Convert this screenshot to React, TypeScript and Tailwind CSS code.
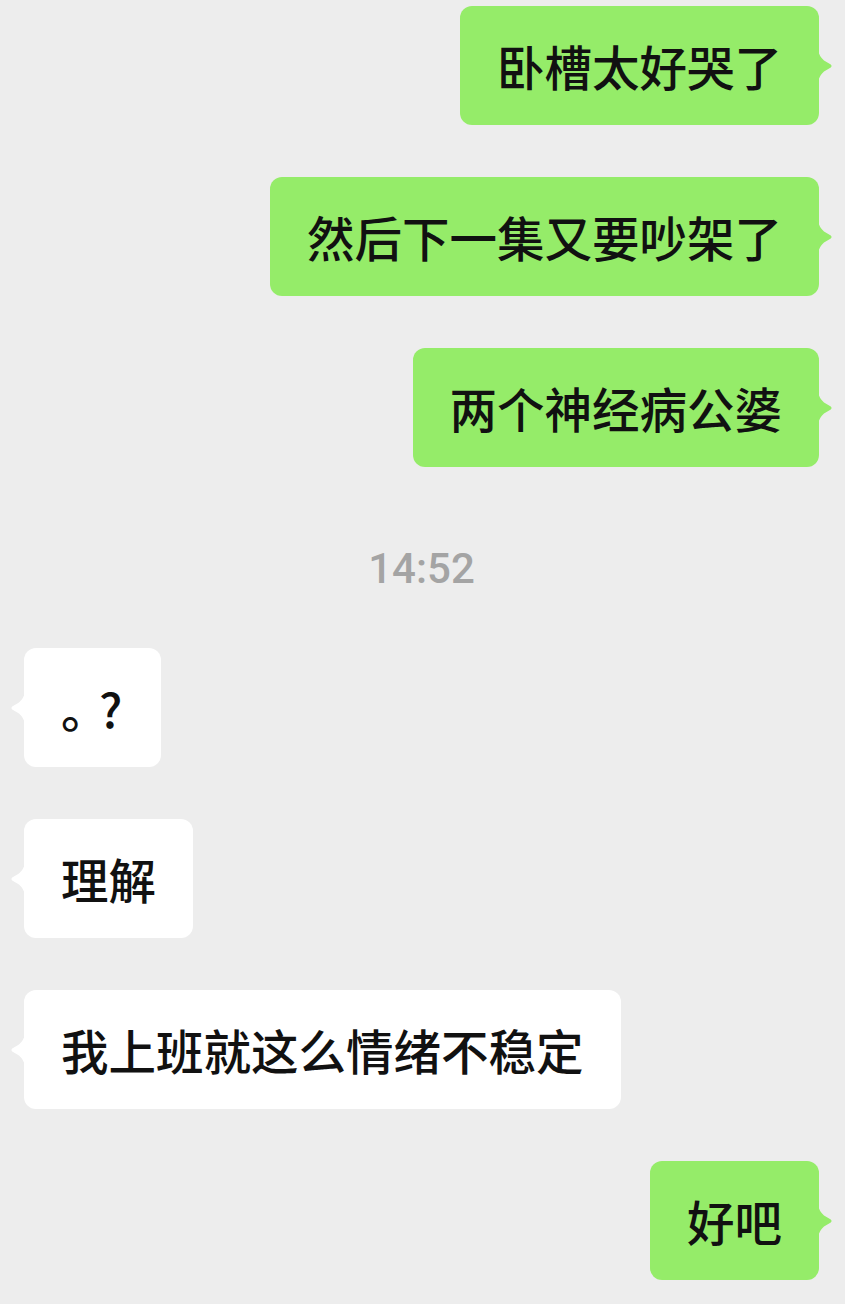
import React from "react";

const CJK = '"Noto Sans CJK SC", "Noto Sans", sans-serif';

function Tail({ side, color }: { side: "left" | "right"; color: string }) {
  if (side === "right") {
    return (
      <svg
        className="absolute top-1/2 -translate-y-1/2 right-[-14px]"
        width="15"
        height="32"
        viewBox="0 0 15 32"
      >
        <path
          d="M0 0 Q1 6 6 10.5 L12.8 14.6 Q14.6 16 12.8 17.4 L6 21.5 Q1 26 0 32 Z"
          fill={color}
        />
      </svg>
    );
  }
  return (
    <svg
      className="absolute top-1/2 -translate-y-1/2 left-[-14px]"
      width="15"
      height="32"
      viewBox="0 0 15 32"
    >
      <path
        d="M15 0 Q14 6 9 10.5 L2.2 14.6 Q0.4 16 2.2 17.4 L9 21.5 Q14 26 15 32 Z"
        fill={color}
      />
    </svg>
  );
}

function Mine({ children }: { children: React.ReactNode }) {
  return (
    <div className="flex justify-end">
      <div
        className="relative bg-[#95ec69] rounded-[12px] px-[37px] py-[36px] text-[47.5px] leading-[47px] text-[#111111] font-medium whitespace-nowrap"
        style={{ fontFamily: CJK }}
      >
        {children}
        <Tail side="right" color="#95ec69" />
      </div>
    </div>
  );
}

function Theirs({ children }: { children: React.ReactNode }) {
  return (
    <div className="flex justify-start">
      <div
        className="relative bg-white rounded-[12px] px-[37px] py-[36px] text-[47.5px] leading-[47px] text-[#111111] font-medium whitespace-nowrap"
        style={{ fontFamily: CJK }}
      >
        {children}
        <Tail side="left" color="#ffffff" />
      </div>
    </div>
  );
}

export default function App() {
  return (
    <div className="w-[845px] h-[1304px] bg-[#ededed] overflow-hidden pl-[24px] pr-[26px] pt-[6px] flex flex-col gap-[52px]">
      <Mine>卧槽太好哭了</Mine>
      <Mine>然后下一集又要吵架了</Mine>
      <Mine>两个神经病公婆</Mine>
      <div
        className="mt-[29px] mb-[6px] text-center text-[42px] leading-[42px] font-medium text-[#a4a4a4]"
        style={{ fontFamily: 'Roboto, "Liberation Sans", sans-serif' }}
      >
        14:52
      </div>
      <Theirs>
        <span className="tracking-[-10.5px]">。</span>
        <span className="pl-[1px] pr-[2px]">?</span>
      </Theirs>
      <Theirs>理解</Theirs>
      <Theirs>我上班就这么情绪不稳定</Theirs>
      <Mine>好吧</Mine>
    </div>
  );
}
